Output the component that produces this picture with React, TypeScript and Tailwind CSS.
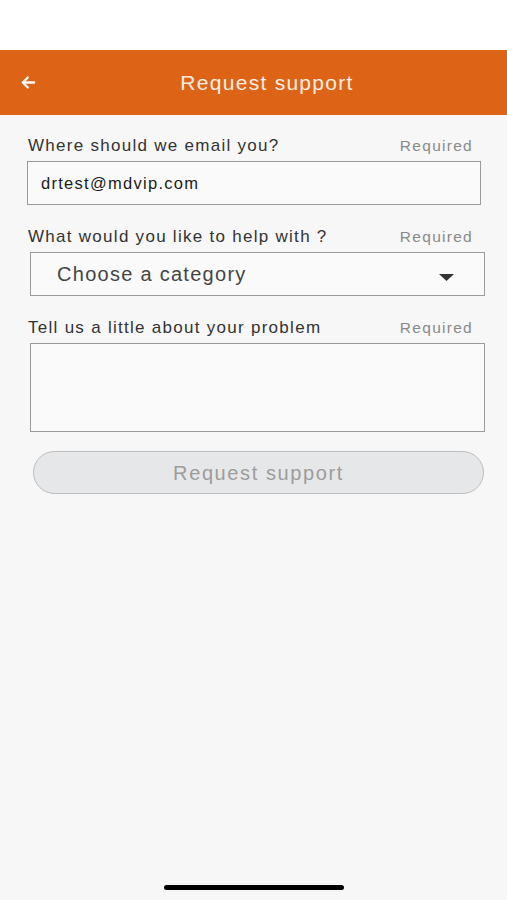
export default function App() {
  return (
    <div
      className="relative flex h-[900px] w-[507px] flex-col bg-[#f7f7f7] tracking-[0.08em] text-[#333]"
      style={{ fontFamily: '"Liberation Sans", Arial, sans-serif' }}
    >
      {/* status area */}
      <div className="h-[50px] bg-white" />

      {/* header */}
      <div className="relative flex h-[65px] items-center justify-center bg-[#dd6416]">
        <button className="absolute left-[20px] top-[24px] text-white">
          <svg width="17" height="17" viewBox="0 0 24 24" fill="none" stroke="currentColor" strokeWidth="3.2" strokeLinecap="round" strokeLinejoin="round">
            <path d="M20 12H5" />
            <path d="M11 5l-7 7 7 7" />
          </svg>
        </button>
        <h1 className="pl-[27px] text-[21px] leading-[24px] text-[#fbeee4]">Request support</h1>
      </div>

      {/* form */}
      <div className="flex flex-col pl-[27px] pr-[22px] pt-[21px]">
        <div className="flex h-[20px] items-center justify-between pl-[1px] pr-[12px]">
          <span className="text-[17px]">Where should we email you?</span>
          <span className="text-[15.5px] text-[#8a8a8a]">Required</span>
        </div>
        <div className="mt-[5px] mr-[4px] flex h-[44px] items-center border border-[#9a9a9a] bg-[#fafafa] px-[13px] text-[16.5px] text-[#1a1a1a]">
          drtest@mdvip.com
        </div>

        <div className="mt-[22px] flex h-[20px] items-center justify-between pl-[1px] pr-[12px]">
          <span className="text-[17px]">What would you like to help with ?</span>
          <span className="text-[15.5px] text-[#8a8a8a]">Required</span>
        </div>
        <div className="mt-[5px] ml-[3px] flex h-[44px] items-center justify-between border border-[#9a9a9a] bg-[#fafafa] pl-[26px] pr-[30px]">
          <span className="text-[20px] text-[#444]">Choose a category</span>
          <svg width="15" height="8" viewBox="0 0 15 8" className="mt-[7px]">
            <path d="M0 0h15L7.5 7z" fill="#333" />
          </svg>
        </div>

        <div className="mt-[22px] flex h-[20px] items-center justify-between pl-[1px] pr-[12px]">
          <span className="text-[17px]">Tell us a little about your problem</span>
          <span className="text-[15.5px] text-[#8a8a8a]">Required</span>
        </div>
        <div className="mt-[5px] ml-[3px] h-[89px] border border-[#9a9a9a] bg-[#fafafa]" />

        <button
          disabled
          className="mt-[19px] ml-[6px] mr-[1px] flex h-[43px] items-center justify-center rounded-full border border-[#bdbdbd] bg-[#e6e7e8] text-[20px] tracking-[0.08em] text-[#9c9c9c]"
        >
          Request support
        </button>
      </div>

      {/* home indicator */}
      <div className="absolute bottom-[10px] left-[164px] h-[5px] w-[180px] rounded-full bg-black" />
    </div>
  );
}
